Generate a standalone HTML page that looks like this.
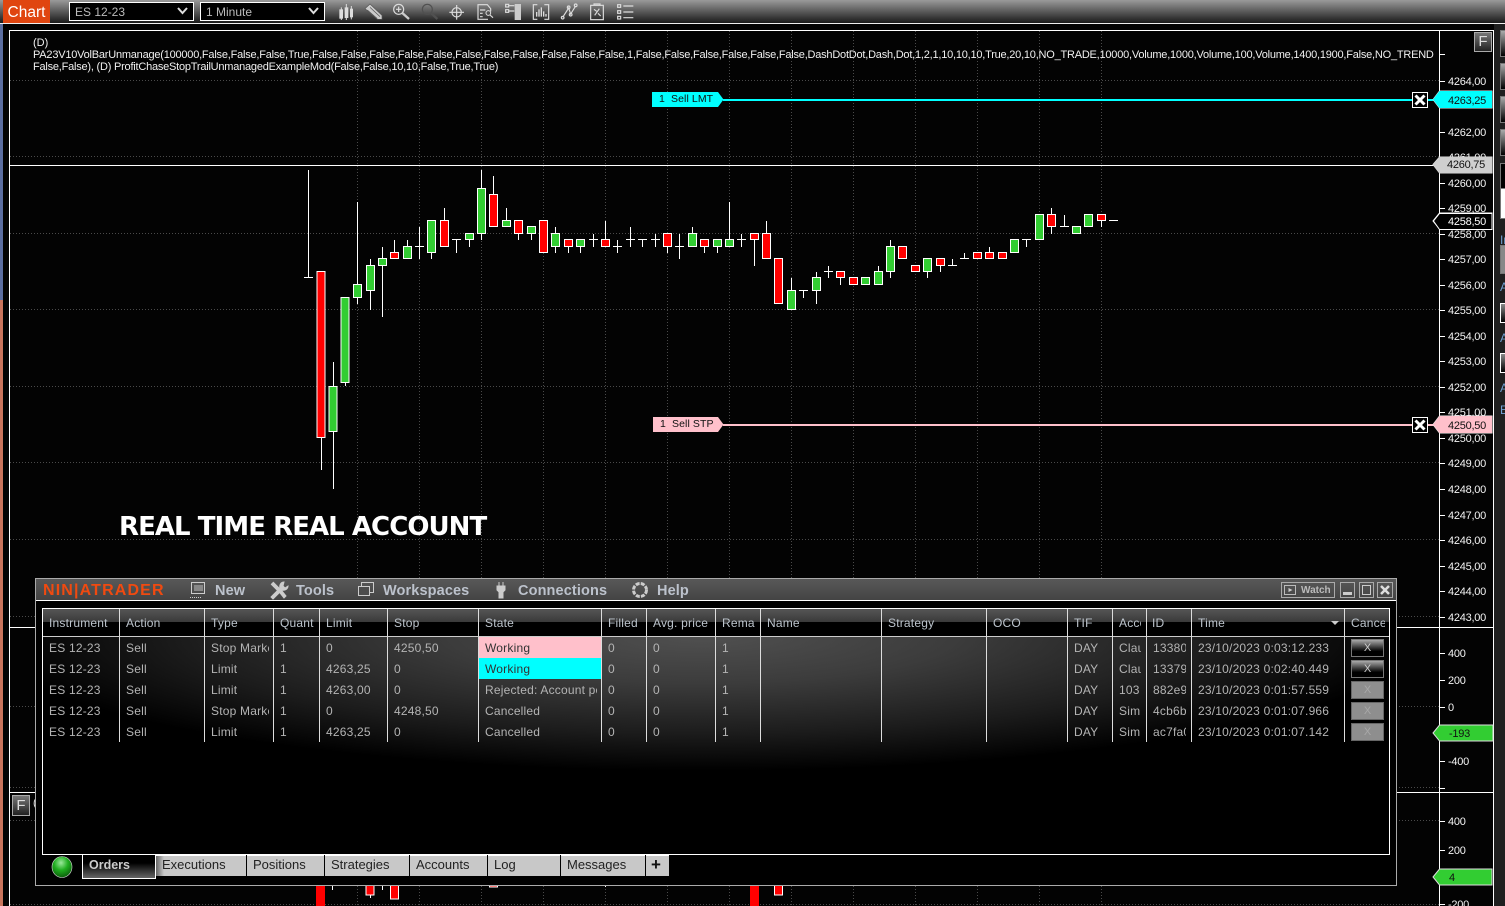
<!DOCTYPE html>
<html><head><meta charset="utf-8"><style>
html,body{margin:0;padding:0;background:#000;width:1505px;height:906px;overflow:hidden}
*{box-sizing:border-box}
body{position:relative;font-family:"Liberation Sans",sans-serif;font-size:12px;color:#fff}
.a{position:absolute}
#top{left:0;top:0;width:1505px;height:23px;background:linear-gradient(#9a9a9a,#1a1a1a)}
.dd{position:absolute;top:2px;height:19px;width:125px;background:#000;border:1px solid #fff;color:#bbb;font-size:12px;line-height:19px;padding-left:5px}
.lg{position:absolute;left:33px;font-size:11px;line-height:12px;white-space:nowrap;color:#f0f0f0}
.y{position:absolute;left:1448px;font-size:11px;line-height:12px;color:#f4f4f4;white-space:nowrap;letter-spacing:-.25px;margin-top:1px}
.tag{position:absolute;left:1448px;font-size:11px;line-height:12px;white-space:nowrap;letter-spacing:-.25px;margin-top:1px}
#panel{left:35px;top:578px;width:1362px;height:308px;background:#000;border:1px solid #aaa}
#tb{left:0;top:0;width:1360px;height:22px;background:linear-gradient(#585858,#444);border-bottom:1px solid #fff}
.m{position:absolute;top:4px;font-size:14.5px;font-weight:bold;color:#bcc2cc;line-height:17px;white-space:nowrap;letter-spacing:.12px}
#grid{left:6px;top:29px;width:1348px;height:247px;background:#000;border:1px solid #fff;overflow:hidden}
table{border-collapse:collapse;table-layout:fixed;position:absolute;left:0;top:0;width:1347px}
td{padding:2px 5px 0 6px;white-space:nowrap;overflow:hidden;height:21px;color:#b4b4b4;font-size:12px;letter-spacing:.2px;clip-path:inset(0 5px 0 0)}
tr.h td{height:27px;color:#bcc4cc;padding-top:0}
td.n{clip-path:inset(0 6px 0 0)}
.v{position:absolute;top:0;width:1px;height:133px;background:#ddd}
.c{position:absolute;left:1308px;width:33px;height:18px;text-align:center;font-size:11px;line-height:17px}
.on{background:linear-gradient(#aaa,#000 70%);border:1px solid #777;color:#ccc}
.off{background:#8e8e8e;border:1px solid #666;color:#a8a8a8}
.t{position:absolute;top:276px;height:21px;background:#c8c8c8;color:#222;font-size:13px;line-height:18px;padding-left:6px;border-top:1px solid #fff}
.sb{position:absolute;left:1500px;width:5px;border:1px solid #777;border-right:0;background:linear-gradient(#aaa,#000)}
.ltr{position:absolute;left:1500px;font-size:12px;color:#6f9fd0;line-height:14px}
</style></head><body>

<svg class="a" style="left:0;top:0" width="1505" height="906" viewBox="0 0 1505 906">
<rect x="0" y="0" width="1505" height="906" fill="#030303"/>
<rect x="0" y="0" width="3" height="300" fill="#5b6ea0"/>
<rect x="0" y="300" width="3" height="606" fill="#c9745c"/>
<rect x="1494" y="24" width="11" height="882" fill="#1f1f1f"/>
<g stroke="#4a4a4a" stroke-width="1" stroke-dasharray="1 2" fill="none" shape-rendering="crispEdges">
<path d="M10 80.5H1439M10 156.5H1439M10 233.5H1439M10 309.5H1439M10 386.5H1439M10 462.5H1439M10 539.5H1439M10 616.5H1439M10 706.5H1439M10 787.5H1439M10 820.5H1439M10 904.5H1439"/>
<path d="M357.5 31V906M419.5 31V906M481.5 31V906M543.5 31V906M605.5 31V906M667.5 31V906M729.5 31V906M791.5 31V906M853.5 31V906M915.5 31V906M977.5 31V906M1039.5 31V906M1101.5 31V906"/>
</g>
<g stroke="#fff" stroke-width="1" fill="none" shape-rendering="crispEdges">
<path d="M9.5 906V30.5H1493.5V906M1439.5 31V906M10 165.5H1439M10 627.5H1493M10 792.5H1493"/>
<path d="M1439 54.5h6M1439 81.5h6M1439 132.5h6M1439 183.5h6M1439 208.5h6M1439 234.5h6M1439 259.5h6M1439 285.5h6M1439 310.5h6M1439 336.5h6M1439 361.5h6M1439 387.5h6M1439 412.5h6M1439 438.5h6M1439 463.5h6M1439 489.5h6M1439 515.5h6M1439 540.5h6M1439 566.5h6M1439 591.5h6M1439 617.5h6M1439 653.5h6M1439 680.5h6M1439 707.5h6M1439 761.5h6M1439 788.5h6M1439 821.5h6M1439 850.5h6M1439 904.5h6"/>
</g>

<!-- candles, tall first pair in page coords -->
<g shape-rendering="crispEdges">
<path d="M333.5 362V489M345.5 382V386M321.5 438V470" stroke="#fff" fill="none"/>
<rect x="317" y="271.5" width="8" height="166" fill="#f00" stroke="#fff"/>
<rect x="329" y="386.5" width="8" height="45" fill="#32cd32" stroke="#fff"/>
<rect x="341" y="297.5" width="8" height="85" fill="#32cd32" stroke="#fff"/>
</g>
<g transform="translate(300,160) scale(.33333)" stroke="#fff" stroke-width="3" shape-rendering="crispEdges">
<path fill="none" d="M25 30V352M12 352H39M172 126V432M211 297V450M247 261V471M283 240V276M322 240V258M358 201V297M345 259H372M394 279V297M433 144V180M469 238V279M456 238H483M508 240V261M544 30V240M580 48V102M619 144V180M655 222V240M694 222V240M766 201V279M805 261V279M841 261V279M880 222V261M867 238H894M916 183V237M952 240V279M939 259H966M991 201V261M978 238H1005M1027 238V261M1014 238H1041M1066 222V261M1053 238H1080M1102 261V279M1138 222V297M1125 259H1152M1177 201V219M1213 261V279M1252 261V279"/>
<g fill="#32cd32">
<rect x="160" y="373" width="25" height="40"/><rect x="199" y="316" width="25" height="76"/><rect x="235" y="295" width="25" height="22"/><rect x="310" y="259" width="25" height="37"/><rect x="382" y="181" width="25" height="97"/><rect x="496" y="220" width="25" height="19"/><rect x="532" y="85" width="25" height="136"/><rect x="607" y="181" width="25" height="19"/><rect x="682" y="199" width="25" height="22"/><rect x="754" y="220" width="25" height="40"/><rect x="829" y="238" width="25" height="22"/><rect x="1165" y="220" width="25" height="40"/><rect x="1240" y="238" width="25" height="22"/>
</g>
<g fill="#f00">
<rect x="271" y="277" width="25" height="19"/><rect x="421" y="181" width="25" height="79"/><rect x="568" y="103" width="25" height="97"/><rect x="643" y="181" width="25" height="40"/><rect x="718" y="181" width="25" height="97"/><rect x="793" y="238" width="25" height="22"/><rect x="904" y="238" width="25" height="22"/><rect x="1090" y="220" width="25" height="40"/><rect x="1201" y="238" width="25" height="22"/>
</g>
</g>
<g transform="translate(700,160) scale(.33333)" stroke="#fff" stroke-width="3" shape-rendering="crispEdges">
<path fill="none" d="M88 126V237M124 222V261M111 238H138M163 240V318M199 183V219M274 354V390M310 391V414M297 391H324M349 336V432M385 318V354M372 334H399M421 354V375M535 318V333M571 240V354M682 336V354M721 318V336M757 297V316M744 316H771M793 279V295M780 295H807M868 261V276M979 238V261M966 238H993M1054 144V222M1093 165V199M1080 199H1107M1204 183V201M1227 181H1254"/>
<g fill="#32cd32">
<rect x="76" y="238" width="25" height="22"/><rect x="262" y="391" width="25" height="58"/><rect x="337" y="352" width="25" height="40"/><rect x="484" y="352" width="25" height="22"/><rect x="523" y="334" width="25" height="40"/><rect x="559" y="259" width="25" height="76"/><rect x="670" y="295" width="25" height="40"/><rect x="931" y="238" width="25" height="40"/><rect x="1006" y="163" width="25" height="76"/><rect x="1117" y="199" width="25" height="22"/><rect x="1153" y="163" width="25" height="37"/>
</g>
<g fill="#f00">
<rect x="151" y="220" width="25" height="19"/><rect x="187" y="220" width="25" height="76"/><rect x="223" y="295" width="25" height="136"/><rect x="409" y="334" width="25" height="19"/><rect x="448" y="352" width="25" height="22"/><rect x="595" y="259" width="25" height="37"/><rect x="634" y="316" width="25" height="19"/><rect x="709" y="295" width="25" height="22"/><rect x="820" y="277" width="25" height="19"/><rect x="856" y="277" width="25" height="19"/><rect x="895" y="277" width="25" height="19"/><rect x="1042" y="163" width="25" height="37"/><rect x="1192" y="163" width="25" height="19"/>
</g>
</g>
<!-- bottom pane candle remnants -->
<g shape-rendering="crispEdges">
<rect x="316" y="884" width="9" height="24" fill="#f00"/>
<rect x="366" y="884" width="8" height="11" fill="#f00" stroke="#fff"/>
<rect x="390.5" y="884" width="8" height="15" fill="#f00" stroke="#fff"/>
<rect x="489.5" y="884" width="8" height="3" fill="#f00" stroke="#fff"/>
<rect x="750" y="884" width="9" height="24" fill="#f00"/>
<rect x="774.5" y="884" width="8" height="11" fill="#f00" stroke="#fff"/>
<path d="M332.5 884V890M382.5 884V890M370.5 895V898M605.5 884V887" stroke="#fff"/>
</g>

<!-- order lines -->
<rect x="723" y="99" width="690" height="2" fill="#0ff"/>
<rect x="1428" y="99" width="6" height="2" fill="#0ff"/>
<rect x="723" y="424" width="690" height="2" fill="#ffc0cb"/>
<rect x="1428" y="424" width="6" height="2" fill="#ffc0cb"/>
<polygon points="652,92 718,92 723.5,99.5 718,107 652,107" fill="#0ff"/>
<polygon points="653,417 718,417 723.5,424.5 718,432 653,432" fill="#ffc0cb"/>

<g>
<rect x="1412.5" y="92.5" width="15" height="15" fill="#000" stroke="#fff"/>
<path d="M1415.5 95.5l9 9M1424.5 95.5l-9 9" stroke="#fff" stroke-width="3"/>
<rect x="1412.5" y="417.5" width="15" height="15" fill="#000" stroke="#fff"/>
<path d="M1415.5 420.5l9 9M1424.5 420.5l-9 9" stroke="#fff" stroke-width="3"/>
</g>
<polygon points="1433,99.5 1439.5,91 1492,91 1492,108 1439.5,108" fill="#0ff" stroke="#ddd" stroke-width="1"/>
<polygon points="1433,424.5 1439.5,416 1492,416 1492,433 1439.5,433" fill="#ffc0cb" stroke="#eee" stroke-width="1"/>
<polygon points="1433,164.5 1439.5,157 1492,157 1492,173 1439.5,173" fill="#cfcfcf" stroke="#ddd" stroke-width="1"/>
<polygon points="1433,221 1439.5,213 1492,213 1492,229 1439.5,229" fill="#000" stroke="#fff" stroke-width="1"/>
<polygon points="1433,733 1439.5,725 1493,725 1493,741 1439.5,741" fill="#32cd32" stroke="#ddd" stroke-width="1"/>
<polygon points="1433,877 1439.5,869 1492,869 1492,885 1439.5,885" fill="#32cd32" stroke="#ddd" stroke-width="1"/>
</svg>

<div class="a" style="left:659px;top:93px;font-size:10.5px;line-height:13px;color:#111;white-space:pre;letter-spacing:.1px">1  Sell LMT</div>
<div class="a" style="left:660px;top:418px;font-size:10.5px;line-height:13px;color:#111;white-space:pre;letter-spacing:.1px">1  Sell STP</div>

<div class="lg" style="top:37px">(D)</div>
<div class="lg" style="top:49px;letter-spacing:-.22px" id="l2">PA23V10VolBarUnmanage(100000,False,False,False,True,False,False,False,False,False,False,False,False,False,False,False,1,False,False,False,False,False,False,DashDotDot,Dash,Dot,1,2,1,10,10,10,True,20,10,NO_TRADE,10000,Volume,1000,Volume,100,Volume,1400,1900,False,NO_TREND</div>
<div class="lg" style="top:61px;letter-spacing:-.22px">False,False), (D) ProfitChaseStopTrailUnmanagedExampleMod(False,False,10,10,False,True,True)</div>

<div class="y" style="top:75px">4264,00</div>
<div class="y" style="top:126px">4262,00</div>
<div class="y" style="top:151px">4261,00</div>
<div class="y" style="top:177px">4260,00</div>
<div class="y" style="top:202px">4259,00</div>
<div class="y" style="top:228px">4258,00</div>
<div class="y" style="top:253px">4257,00</div>
<div class="y" style="top:279px">4256,00</div>
<div class="y" style="top:304px">4255,00</div>
<div class="y" style="top:330px">4254,00</div>
<div class="y" style="top:355px">4253,00</div>
<div class="y" style="top:381px">4252,00</div>
<div class="y" style="top:406px">4251,00</div>
<div class="y" style="top:432px">4250,00</div>
<div class="y" style="top:457px">4249,00</div>
<div class="y" style="top:483px">4248,00</div>
<div class="y" style="top:509px">4247,00</div>
<div class="y" style="top:534px">4246,00</div>
<div class="y" style="top:560px">4245,00</div>
<div class="y" style="top:585px">4244,00</div>
<div class="y" style="top:611px">4243,00</div>
<div class="y" style="top:647px">400</div>
<div class="y" style="top:674px">200</div>
<div class="y" style="top:701px">0</div>
<div class="y" style="top:755px">-400</div>
<div class="y" style="top:815px">400</div>
<div class="y" style="top:844px">200</div>
<div class="y" style="top:898px">-200</div>

<svg class="a" style="left:1433px;top:91px" width="60" height="17"><polygon points="0,8.5 6.5,0 59,0 59,17 6.5,17" fill="#0ff"/></svg>
<svg class="a" style="left:1433px;top:416px" width="60" height="17"><polygon points="0,8.5 6.5,0 59,0 59,17 6.5,17" fill="#ffc0cb"/></svg>
<svg class="a" style="left:1433px;top:157px" width="60" height="17"><polygon points="0,8 6.5,0 59,0 59,16 6.5,16" fill="#cfcfcf"/></svg>
<svg class="a" style="left:1433px;top:213px" width="60" height="17"><polygon points="0.5,8 6.5,0.5 59,0.5 59,16.5 6.5,16.5" fill="#000" stroke="#fff"/></svg>
<div class="tag" style="top:94px;color:#111">4263,25</div>
<div class="tag" style="top:419px;color:#111">4250,50</div>
<div class="tag" style="top:158px;left:1447px;color:#111">4260,75</div>
<div class="tag" style="top:215px;color:#fff">4258,50</div>
<div class="tag" style="top:727px;left:1449px;color:#111">-193</div>
<div class="tag" style="top:871px;left:1449px;color:#111">4</div>

<div class="a" style="left:119px;top:510px;font-size:26px;font-weight:bold;line-height:34px;white-space:nowrap;color:#fff;font-family:'DejaVu Sans',sans-serif;letter-spacing:-.95px">REAL TIME REAL ACCOUNT</div>

<!-- F buttons -->
<div class="a" style="left:1474px;top:32px;width:18px;height:20px;background:linear-gradient(#777,#222);border:1px solid #aaa;color:#ddd;font-size:15px;line-height:18px;text-align:center">F</div>
<div class="a" style="left:12px;top:795px;width:18px;height:21px;background:linear-gradient(#777,#222);border:1px solid #aaa;color:#ddd;font-size:15px;line-height:19px;text-align:center">F</div>
<div class="a" style="left:33px;top:797px;font-size:11px;line-height:13px;color:#ddd">(</div>

<!-- right strip -->
<div class="sb" style="top:30px;height:27px"></div>
<div class="sb" style="top:63px;height:27px"></div>
<div class="sb" style="top:96px;height:27px"></div>
<div class="sb" style="top:129px;height:27px"></div>
<div class="sb" style="top:163px;height:56px;background:linear-gradient(#000 45%,#fff 45%)"></div>
<div class="ltr" style="top:233px">In</div>
<div class="sb" style="top:245px;height:29px;background:#888"></div>
<div class="ltr" style="top:280px">A</div>
<div class="sb" style="top:303px;height:20px;border-color:#fff;background:linear-gradient(#888,#000)"></div>
<div class="ltr" style="top:331px">A</div>
<div class="sb" style="top:353px;height:20px;border-color:#fff;background:linear-gradient(#888,#000)"></div>
<div class="ltr" style="top:381px">A</div>
<div class="ltr" style="top:403px">E</div>

<!-- top bar -->
<div class="a" id="top"></div>
<div class="a" style="left:0;top:23px;width:1505px;height:1px;background:#eee"></div>
<div class="a" style="left:3px;top:0;width:47px;height:23px;background:#e0450f;color:#fff;font-size:15.5px;line-height:25px;text-align:center">Chart</div>
<div class="dd" style="left:69px">ES 12-23</div>
<div class="dd" style="left:200px">1 Minute</div>
<svg class="a" style="left:0;top:0" width="700" height="24" fill="none">
<path d="M178 8l4.5 5 4.5-5M309 8l4.5 5 4.5-5" stroke="#ddd" stroke-width="2"/>
<g transform="translate(320,0) scale(.33333)" stroke="#ddd" stroke-width="3.5">
<path d="M64 22V60M79 12V60M94 18V58" stroke-width="3"/>
<rect x="58" y="28" width="11" height="28" fill="#ddd" stroke="none"/><rect x="74" y="22" width="11" height="32" fill="#ddd" stroke="none"/><rect x="90" y="26" width="9" height="26" fill="#ddd" stroke="none"/>
<polygon points="135,26 150,12 186,46 186,58 172,58" fill="#ccc" stroke="#555" stroke-width="2"/>
<path d="M142 30l30 26M150 22l30 28" stroke="#555" stroke-width="2"/>
<circle cx="236" cy="28" r="15"/><path d="M228 28h16M236 20v16"/><path d="M247 39l20 18" stroke-width="7" stroke="#ccc"/>
<g stroke="#505050"><circle cx="322" cy="28" r="15"/><path d="M333 39l19 18" stroke-width="7"/></g>
<circle cx="410" cy="37" r="14"/><path d="M388 37h44M410 15v44"/>
<path d="M504 58H474V14H502L512 26V34M480 30h16M480 40h8M480 50h8"/><circle cx="505" cy="39" r="7" stroke-width="3"/><path d="M510 45l9 8"/>
<rect x="557" y="13" width="9" height="8"/><rect x="557" y="29" width="9" height="8"/><path d="M566 17h17M566 33h17"/><rect x="584" y="12" width="19" height="48" fill="#ccc" stroke="none"/>
<path d="M652 14H640V58H652M673 14H686V58H673"/><path d="M650 50V36M657 50V28M664 50V22M671 50V34M678 50V42" stroke-width="4"/>
<path d="M728 52L746 24L752 42L767 18"/><circle cx="728" cy="53" r="4"/><circle cx="746" cy="22" r="4"/><circle cx="752" cy="44" r="4"/><circle cx="767" cy="16" r="4"/>
<rect x="812" y="16" width="38" height="43"/><path d="M822 16v-4h18v4M822 28l8 6M838 26l-14 20M834 40l8 8"/>
<rect x="893" y="14" width="9" height="8"/><rect x="893" y="32" width="9" height="8"/><rect x="893" y="49" width="9" height="8"/><path d="M910 18h30M910 36h30M910 53h30"/>
</g></svg>

<!-- control center panel -->
<div class="a" id="panel">
 <div class="a" id="tb">
  <div class="m" style="left:7px;top:3px;color:#f04a10;font-size:16px;letter-spacing:1.15px">NIN|ATRADER</div>
  <div class="m" style="left:179px">New</div>
  <div class="m" style="left:260px">Tools</div>
  <div class="m" style="left:347px">Workspaces</div>
  <div class="m" style="left:482px">Connections</div>
  <div class="m" style="left:621px">Help</div>
  <svg class="a" style="left:0;top:0" width="1360" height="22" fill="none" stroke="#ccc">
   <rect x="155.5" y="3.5" width="13" height="11"/><rect x="158" y="6" width="9" height="6" stroke="none" fill="#888"/><path d="M154 18.5h12" stroke-dasharray="1 1"/>
   <path d="M235 5l9 9 4 5 2-2-4-5-9-9M248 3c-3 0-5 3-4 6l-9 9 2 2 9-9c3 1 6-1 6-4l-3 2-2-2z" fill="#ccc" stroke-width="1"/>
   <rect x="325.5" y="3.5" width="12" height="10"/><rect x="322.5" y="7.5" width="11" height="9" fill="#4c4c4c"/>
   <path d="M463 3v4M467 3v4M461 7h8v4l-2 2v6h-4v-6l-2-2z" fill="#ccc"/>
   <circle cx="604" cy="11" r="6.5" stroke-width="3" stroke-dasharray="4 1.2"/>
   <rect x="1245.5" y="3.5" width="53" height="15" stroke="#aaa"/><rect x="1248.5" y="6.5" width="11" height="9" stroke="#bbb"/><path d="M1252.5 9l4 2-4 2z" fill="#ccc" stroke="none"/>
   <rect x="1304.5" y="3.5" width="14" height="15" stroke="#aaa"/><rect x="1307" y="13" width="9" height="3" fill="#ccc" stroke="none"/>
   <rect x="1323.5" y="3.5" width="14" height="15" stroke="#aaa"/><rect x="1326.5" y="6.5" width="8" height="9" stroke="#ccc"/>
   <rect x="1341.5" y="3.5" width="15" height="15" stroke="#aaa"/><path d="M1345 7l8 8M1353 7l-8 8" stroke="#ddd" stroke-width="2.5"/>
  </svg>
  <div class="a" style="left:1265px;top:5px;font-size:10px;font-weight:bold;color:#bbb;line-height:13px">Watch</div>
 </div>

 <div class="a" id="grid">
  <div class="a" style="left:0;top:27px;width:1347px;height:140px;background:radial-gradient(ellipse 720px 135px at 660px 0,#505050 0%,#3c3c3c 35%,#1c1c1c 72%,#000 100%)"></div>
  <div class="a" style="left:0;top:0;width:1347px;height:13px;background:linear-gradient(#555,#3a3a3a)"></div>
  <div class="a" style="left:0;top:27px;width:1347px;height:1px;background:#ccc"></div>
  <div class="a" style="left:435px;top:28px;width:123px;height:21px;background:#ffc0cb"></div>
  <div class="a" style="left:435px;top:49px;width:123px;height:21px;background:#0ff"></div>
  <table>
   <colgroup><col style="width:77px"><col style="width:85px"><col style="width:69px"><col style="width:46px"><col style="width:68px"><col style="width:91px"><col style="width:123px"><col style="width:45px"><col style="width:69px"><col style="width:45px"><col style="width:121px"><col style="width:105px"><col style="width:81px"><col style="width:45px"><col style="width:34px"><col style="width:45px"><col style="width:153px"><col style="width:45px"></colgroup>
   <tr class="h"><td>Instrument</td><td>Action</td><td>Type</td><td>Quant</td><td>Limit</td><td>Stop</td><td>State</td><td>Filled</td><td>Avg. price</td><td>Rema</td><td>Name</td><td>Strategy</td><td>OCO</td><td>TIF</td><td class="n">Account</td><td style="padding-left:5px">ID</td><td>Time</td><td>Cancel</td></tr>
   <tr><td>ES 12-23</td><td>Sell</td><td>Stop Market</td><td>1</td><td>0</td><td>4250,50</td><td style="color:#333">Working</td><td>0</td><td>0</td><td>1</td><td></td><td></td><td></td><td>DAY</td><td class="n">Claudio</td><td class="n">13380</td><td>23/10/2023 0:03:12.233</td><td></td></tr>
   <tr><td>ES 12-23</td><td>Sell</td><td>Limit</td><td>1</td><td>4263,25</td><td>0</td><td style="color:#333">Working</td><td>0</td><td>0</td><td>1</td><td></td><td></td><td></td><td>DAY</td><td class="n">Claudio</td><td class="n">13379</td><td>23/10/2023 0:02:40.449</td><td></td></tr>
   <tr><td>ES 12-23</td><td>Sell</td><td>Limit</td><td>1</td><td>4263,00</td><td>0</td><td>Rejected: Account pending</td><td>0</td><td>0</td><td>1</td><td></td><td></td><td></td><td>DAY</td><td class="n">103</td><td class="n">882e9</td><td>23/10/2023 0:01:57.559</td><td></td></tr>
   <tr><td>ES 12-23</td><td>Sell</td><td>Stop Market</td><td>1</td><td>0</td><td>4248,50</td><td>Cancelled</td><td>0</td><td>0</td><td>1</td><td></td><td></td><td></td><td>DAY</td><td class="n">Sim101</td><td class="n">4cb6b</td><td>23/10/2023 0:01:07.966</td><td></td></tr>
   <tr><td>ES 12-23</td><td>Sell</td><td>Limit</td><td>1</td><td>4263,25</td><td>0</td><td>Cancelled</td><td>0</td><td>0</td><td>1</td><td></td><td></td><td></td><td>DAY</td><td class="n">Sim101</td><td class="n">ac7fa0</td><td>23/10/2023 0:01:07.142</td><td></td></tr>
  </table>
  <i class="v" style="left:76px"></i><i class="v" style="left:161px"></i><i class="v" style="left:230px"></i><i class="v" style="left:276px"></i><i class="v" style="left:344px"></i><i class="v" style="left:435px"></i><i class="v" style="left:558px"></i><i class="v" style="left:603px"></i><i class="v" style="left:672px"></i><i class="v" style="left:717px"></i><i class="v" style="left:838px"></i><i class="v" style="left:943px"></i><i class="v" style="left:1024px"></i><i class="v" style="left:1069px"></i><i class="v" style="left:1103px"></i><i class="v" style="left:1148px"></i><i class="v" style="left:1301px"></i>
  <svg class="a" style="left:1288px;top:12px" width="9" height="5"><path d="M0 0h8l-4 4z" fill="#ccc"/></svg>
  <div class="c on" style="top:30px">X</div>
  <div class="c on" style="top:51px">X</div>
  <div class="c off" style="top:72px">X</div>
  <div class="c off" style="top:93px">X</div>
  <div class="c off" style="top:114px">X</div>
 </div>

 <svg class="a" style="left:15px;top:276px" width="22" height="24"><defs><radialGradient id="b" cx=".45" cy=".3" r=".7"><stop offset="0" stop-color="#9be89b"/><stop offset=".5" stop-color="#1fae1f"/><stop offset="1" stop-color="#0b5f0b"/></radialGradient></defs><ellipse cx="11" cy="12" rx="10" ry="10.5" fill="url(#b)" stroke="#ddd" stroke-width=".6"/></svg>
 <div class="t" style="left:46px;width:74px;height:24px;background:linear-gradient(#000 35%,#666);color:#ccc;border:1px solid #fff;border-top:0;font-weight:bold;font-size:12.5px;line-height:20px">Orders</div>
 <div class="t" style="left:120px;width:90px;background:linear-gradient(90deg,#666,#c8c8c8 8px)">Executions</div>
 <div class="t" style="left:211px;width:77px">Positions</div>
 <div class="t" style="left:289px;width:84px">Strategies</div>
 <div class="t" style="left:374px;width:77px">Accounts</div>
 <div class="t" style="left:452px;width:72px">Log</div>
 <div class="t" style="left:525px;width:84px">Messages</div>
 <div class="t" style="left:610px;width:23px;font-weight:bold;font-size:17px;padding-left:5px;color:#111">+</div>
</div>
</body></html>
